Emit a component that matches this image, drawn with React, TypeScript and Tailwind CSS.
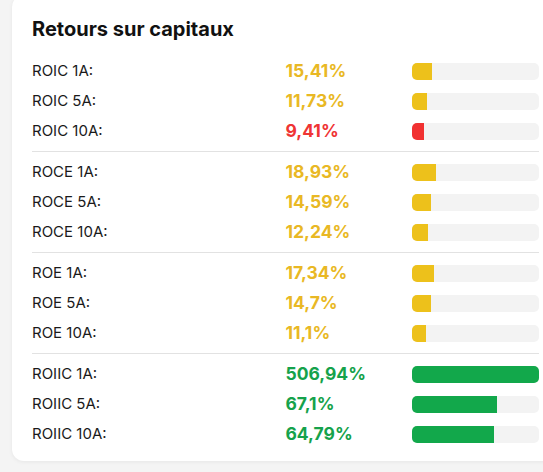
import React from 'react';

type Row = { label: string; value: number; text: string };

const groups: Row[][] = [
  [
    { label: 'ROIC 1A:', value: 15.41, text: '15,41%' },
    { label: 'ROIC 5A:', value: 11.73, text: '11,73%' },
    { label: 'ROIC 10A:', value: 9.41, text: '9,41%' },
  ],
  [
    { label: 'ROCE 1A:', value: 18.93, text: '18,93%' },
    { label: 'ROCE 5A:', value: 14.59, text: '14,59%' },
    { label: 'ROCE 10A:', value: 12.24, text: '12,24%' },
  ],
  [
    { label: 'ROE 1A:', value: 17.34, text: '17,34%' },
    { label: 'ROE 5A:', value: 14.7, text: '14,7%' },
    { label: 'ROE 10A:', value: 11.1, text: '11,1%' },
  ],
  [
    { label: 'ROIIC 1A:', value: 506.94, text: '506,94%' },
    { label: 'ROIIC 5A:', value: 67.1, text: '67,1%' },
    { label: 'ROIIC 10A:', value: 64.79, text: '64,79%' },
  ],
];

const tone = (v: number) => {
  if (v < 10) return { text: 'text-[#ef3434]', bar: 'bg-[#f13131]' };
  if (v < 20) return { text: 'text-[#e9b824]', bar: 'bg-[#edc11b]' };
  return { text: 'text-[#15a24b]', bar: 'bg-[#12a84b]' };
};

const MetricRow = ({ row }: { row: Row }) => {
  const t = tone(row.value);
  return (
    <div className="grid grid-cols-[2fr_1fr_1fr] items-center h-[30px]">
      <span className="text-[15px] text-[#1a1a1a]">{row.label}</span>
      <span className={`text-[17.5px] font-bold ${t.text}`}>{row.text}</span>
      <div className="h-[17px] rounded-[5px] bg-[#f3f3f3] overflow-hidden">
        <div className={`h-full ${t.bar}`} style={{ width: `${Math.min(row.value, 100)}%` }} />
      </div>
    </div>
  );
};

export default function App() {
  return (
    <div
      className="w-[543px] h-[472px] overflow-hidden bg-[#f4f4f4]"
      style={{ fontFamily: 'Inter, "Noto Sans", sans-serif' }}
    >
      <div className="ml-[12px] -mt-[5px] w-[547px] bg-white rounded-[12px] shadow-[0_1px_4px_rgba(0,0,0,0.06)] px-[20px] pt-[20px] pb-[7px]">
        <h2 className="text-[20px] font-bold text-[#111] leading-[28px] mb-[13px]">Retours sur capitaux</h2>
        {groups.map((g, i) => (
          <div
            key={i}
            className={i === 0 ? 'pb-[5px]' : 'border-t border-[#e2e2e2] pt-[5px] pb-[5px]'}
          >
            {g.map((r) => (
              <MetricRow key={r.label} row={r} />
            ))}
          </div>
        ))}
      </div>
    </div>
  );
}
